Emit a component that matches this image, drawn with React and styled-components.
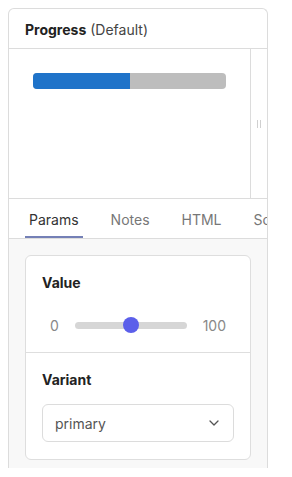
import React from "react";
import styled, { createGlobalStyle } from "styled-components";

const Global = createGlobalStyle`
  body {
    margin: 8px;
    background: #ffffff;
    font-family: Inter, "Noto Sans", sans-serif;
    -webkit-font-smoothing: antialiased;
  }
`;

const Card = styled.div`
  width: 260px;
  height: 460px;
  box-sizing: border-box;
  border: 1px solid #dcdcdc;
  border-bottom: none;
  border-radius: 6px 6px 0 0;
  overflow: hidden;
  display: flex;
  flex-direction: column;
`;

const Header = styled.div`
  flex-shrink: 0;
  height: 40px;
  box-sizing: border-box;
  border-bottom: 1px solid #dcdcdc;
  display: flex;
  align-items: center;
  padding: 1px 16px 0;
  font-size: 14px;
  color: #444;
`;

const Title = styled.strong`
  font-weight: 700;
  color: #222;
  margin-right: 4px;
`;

const Preview = styled.div`
  flex-shrink: 0;
  height: 150px;
  box-sizing: border-box;
  border-bottom: 1px solid #dcdcdc;
  display: flex;
`;

const Canvas = styled.div`
  flex: 1;
  border-right: 1px solid #dcdcdc;
  padding: 24px 24px 0 24px;
`;

const Handle = styled.div`
  width: 16px;
  display: flex;
  align-items: center;
  justify-content: center;
`;

const Grip = styled.span`
  width: 2px;
  height: 8px;
  border-left: 1px solid #d0d0d0;
  border-right: 1px solid #d0d0d0;
`;

const Track = styled.div`
  height: 16px;
  border-radius: 4px;
  background: #bdbdbd;
  overflow: hidden;
`;

const Fill = styled.div`
  height: 100%;
  background: #1f73c9;
`;

const Tabs = styled.div`
  flex-shrink: 0;
  height: 40px;
  box-sizing: border-box;
  border-bottom: 1px solid #dcdcdc;
  display: flex;
  gap: 24px;
  padding-left: 16px;
  white-space: nowrap;
  overflow: hidden;
`;

const Tab = styled.div`
  padding: 2px 4px 0;
  display: flex;
  align-items: center;
  font-size: 14px;
  color: ${(p) => (p.$active ? "#333" : "#777")};
  box-shadow: ${(p) => (p.$active ? "inset 0 -2px 0 #7480b6" : "none")};
`;

const Panel = styled.div`
  flex: 1 0 auto;
  background: #f8f8f8;
  padding: 16px;
`;

const Box = styled.div`
  background: #fff;
  border: 1px solid #dedede;
  border-radius: 6px;
`;

const Section = styled.div`
  padding: 17px 16px;
  border-top: ${(p) => (p.$first ? "none" : "1px solid #dedede")};
`;

const Label = styled.div`
  font-size: 14px;
  font-weight: 700;
  color: #222;
  line-height: 20px;
  margin-bottom: ${(p) => p.$gap}px;
`;

const SliderRow = styled.div`
  display: flex;
  align-items: center;
  gap: 16px;
  padding: 0 8px;
  height: 20px;
  font-size: 14px;
  color: #888;
`;

const SliderTrack = styled.div`
  flex: 1;
  position: relative;
  height: 7px;
  border-radius: 4px;
  background: #d6d6d6;
`;

const Thumb = styled.div`
  position: absolute;
  top: 50%;
  width: 16px;
  height: 16px;
  border-radius: 50%;
  background: #5b5fea;
  transform: translate(-50%, -50%);
`;

const Select = styled.div`
  height: 38px;
  box-sizing: border-box;
  border: 1px solid #dcdcdc;
  border-radius: 6px;
  display: flex;
  align-items: center;
  justify-content: space-between;
  padding: 0 14px 0 12px;
  font-size: 14px;
  color: #555;
`;

export default function App() {
  const value = 50;
  return (
    <>
      <Global />
      <Card>
        <Header>
          <Title>Progress</Title> (Default)
        </Header>
        <Preview>
          <Canvas>
            <Track>
              <Fill style={{ width: `${value}%` }} />
            </Track>
          </Canvas>
          <Handle>
            <Grip />
          </Handle>
        </Preview>
        <Tabs>
          <Tab $active>Params</Tab>
          <Tab>Notes</Tab>
          <Tab>HTML</Tab>
          <Tab>Source</Tab>
        </Tabs>
        <Panel>
          <Box>
            <Section $first>
              <Label $gap={22}>Value</Label>
              <SliderRow>
                <span>0</span>
                <SliderTrack>
                  <Thumb style={{ left: `${value}%` }} />
                </SliderTrack>
                <span>100</span>
              </SliderRow>
            </Section>
            <Section>
              <Label $gap={14}>Variant</Label>
              <Select>
                <span>primary</span>
                <svg width="10" height="6" viewBox="0 0 10 6" fill="none">
                  <path d="M1 1l4 4 4-4" stroke="#555" strokeWidth="1.3" strokeLinecap="round" strokeLinejoin="round" />
                </svg>
              </Select>
            </Section>
          </Box>
        </Panel>
      </Card>
    </>
  );
}
